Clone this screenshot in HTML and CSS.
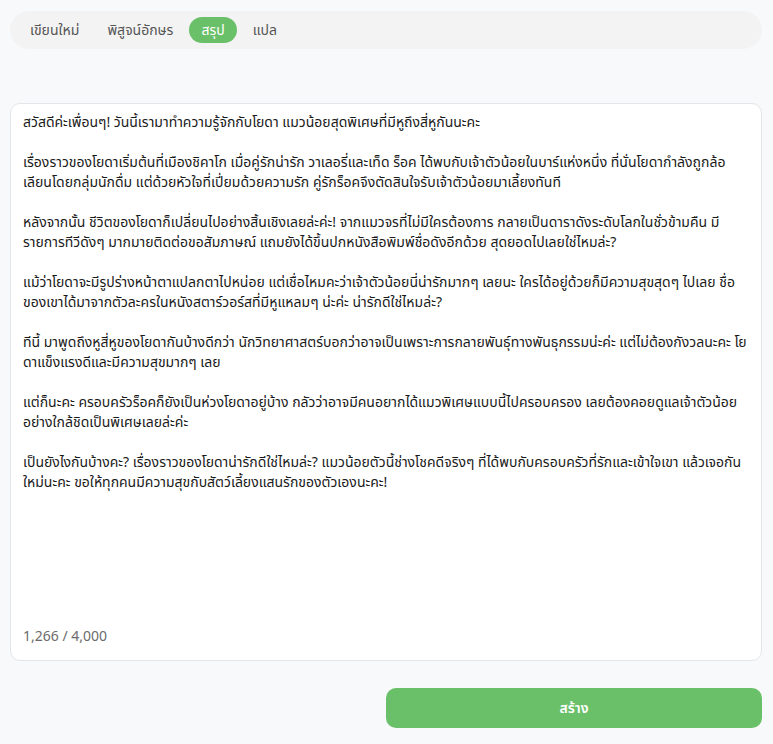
FILE: index.html
```html
<!DOCTYPE html>
<html lang="th">
<head>
    <meta charset="UTF-8">
    <meta name="viewport" content="width=device-width, initial-scale=1.0">
    <title>สรุป</title>
    <link rel="stylesheet" href="styles.css">
</head>
<body>
    <div class="page">
        <div class="tabs">
            <a href="javascript:;" class="tab">เขียนใหม่</a>
            <a href="javascript:;" class="tab">พิสูจน์อักษร</a>
            <a href="javascript:;" class="tab active">สรุป</a>
            <a href="javascript:;" class="tab">แปล</a>
        </div>

        <div class="editor">
            <div class="text">
                <p>สวัสดีค่ะเพื่อนๆ! วันนี้เรามาทำความรู้จักกับโยดา แมวน้อยสุดพิเศษที่มีหูถึงสี่หูกันนะคะ</p>
                <p>เรื่องราวของโยดาเริ่มต้นที่เมืองชิคาโก เมื่อคู่รักน่ารัก วาเลอรี่และเท็ด ร็อค ได้พบกับเจ้าตัวน้อยในบาร์แห่งหนึ่ง ที่นั่นโยดากำลังถูกล้อเลียนโดยกลุ่มนักดื่ม แต่ด้วยหัวใจที่เปี่ยมด้วยความรัก คู่รักร็อคจึงตัดสินใจรับเจ้าตัวน้อยมาเลี้ยงทันที</p>
                <p>หลังจากนั้น ชีวิตของโยดาก็เปลี่ยนไปอย่างสิ้นเชิงเลยล่ะค่ะ! จากแมวจรที่ไม่มีใครต้องการ กลายเป็นดาราดังระดับโลกในชั่วข้ามคืน มีรายการทีวีดังๆ มากมายติดต่อขอสัมภาษณ์ แถมยังได้ขึ้นปกหนังสือพิมพ์ชื่อดังอีกด้วย สุดยอดไปเลยใช่ไหมล่ะ?</p>
                <p>แม้ว่าโยดาจะมีรูปร่างหน้าตาแปลกตาไปหน่อย แต่เชื่อไหมคะว่าเจ้าตัวน้อยนี่น่ารักมากๆ เลยนะ ใครได้อยู่ด้วยก็มีความสุขสุดๆ ไปเลย ชื่อของเขาได้มาจากตัวละครในหนังสตาร์วอร์สที่มีหูแหลมๆ น่ะค่ะ น่ารักดีใช่ไหมล่ะ?</p>
                <p>ทีนี้ มาพูดถึงหูสี่หูของโยดากันบ้างดีกว่า นักวิทยาศาสตร์บอกว่าอาจเป็นเพราะการกลายพันธุ์ทางพันธุกรรมน่ะค่ะ แต่ไม่ต้องกังวลนะคะ โยดาแข็งแรงดีและมีความสุขมากๆ เลย</p>
                <p>แต่ก็นะคะ ครอบครัวร็อคก็ยังเป็นห่วงโยดาอยู่บ้าง กลัวว่าอาจมีคนอยากได้แมวพิเศษแบบนี้ไปครอบครอง เลยต้องคอยดูแลเจ้าตัวน้อยอย่างใกล้ชิดเป็นพิเศษเลยล่ะค่ะ</p>
                <p>เป็นยังไงกันบ้างคะ? เรื่องราวของโยดาน่ารักดีใช่ไหมล่ะ? แมวน้อยตัวนี้ช่างโชคดีจริงๆ ที่ได้พบกับครอบครัวที่รักและเข้าใจเขา แล้วเจอกันใหม่นะคะ ขอให้ทุกคนมีความสุขกับสัตว์เลี้ยงแสนรักของตัวเองนะคะ!</p>
            </div>
            <div class="count">1,266 / 4,000</div>
        </div>

        <div class="actions">
            <button class="create">สร้าง</button>
        </div>
    </div>
</body>
</html>
```

FILE: styles.css
```css
* {
    margin: 0;
    padding: 0;
    box-sizing: border-box;
}

body {
    background: #f8f9fb;
    font-family: "Noto Sans", "Noto Sans Thai", sans-serif;
    color: #1f1f1f;
}

.page {
    padding: 11px 11px 0 10px;
}

.tabs {
    display: flex;
    align-items: center;
    gap: 4px;
    height: 38px;
    padding: 0 8px;
    background: #f3f3f3;
    border-radius: 19px;
}

.tab {
    display: block;
    padding: 3px 12px;
    border-radius: 14px;
    font-size: 14px;
    line-height: 20px;
    color: #555;
    text-decoration: none;
}

.tab.active {
    background: #6abf69;
    color: #fff;
}

.editor {
    margin-top: 54px;
    height: 558px;
    background: #fff;
    border: 1px solid #e3e5e8;
    border-radius: 10px;
    padding: 8px 12px 14px 12px;
    display: flex;
    flex-direction: column;
}

.text {
    flex: 1;
    font-size: 14px;
    line-height: 20px;
    color: #1a1a1a;
}

.text p + p {
    margin-top: 20px;
}

.count {
    font-size: 14px;
    line-height: 20px;
    color: #6b6b6b;
}

.actions {
    display: flex;
    justify-content: flex-end;
    margin-top: 27px;
}

.create {
    width: 376px;
    height: 40px;
    border: none;
    border-radius: 10px;
    background: #6abf69;
    color: #fff;
    font-family: inherit;
    font-size: 14px;
    font-weight: 600;
}
```
